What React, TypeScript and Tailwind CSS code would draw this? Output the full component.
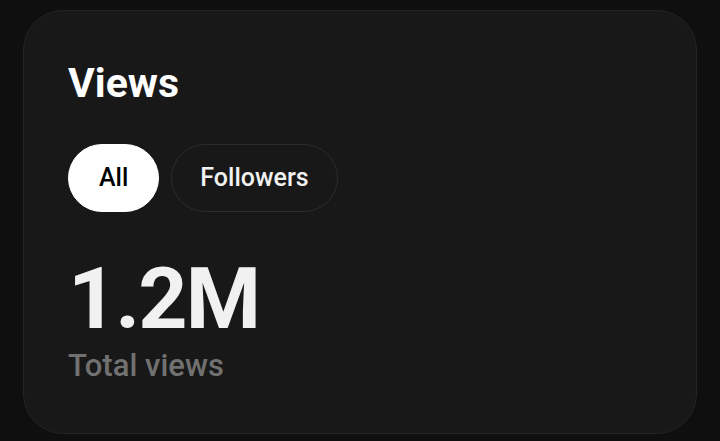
import { useState } from "react";

const FILTERS = ["All", "Followers"];

export default function App() {
  const [active, setActive] = useState("All");

  return (
    <div
      className="h-[441px] w-[720px] bg-[#0f0f0f] pl-[23px] pt-[10px]"
      style={{ fontFamily: "Roboto, 'Liberation Sans', sans-serif" }}
    >
      <div className="flex h-[424px] w-[674px] flex-col rounded-[40px] border border-[#242424] bg-[#181818] px-[44px] pt-[48px]">
        <h2 className="text-[41px] font-bold leading-[48px] text-white">Views</h2>

        <div className="mt-[37px] flex gap-[12px]">
          {FILTERS.map((f) => (
            <button
              key={f}
              onClick={() => setActive(f)}
              className={
                f === active
                  ? "h-[68px] rounded-full border border-white bg-white px-[30px] text-[25px] font-medium text-black"
                  : "h-[68px] rounded-full border border-[#2c2c2c] bg-transparent px-[28px] text-[25px] font-medium text-[#f1f1f1]"
              }
            >
              {f}
            </button>
          ))}
        </div>

        <div className="mt-[42px] text-[86px] font-bold leading-[90px] tracking-[-2px] text-[#f1f1f1]">1.2M</div>
        <div className="mt-[4px] text-[31px] font-medium leading-[36px] text-[#717171]">Total views</div>
      </div>
    </div>
  );
}
